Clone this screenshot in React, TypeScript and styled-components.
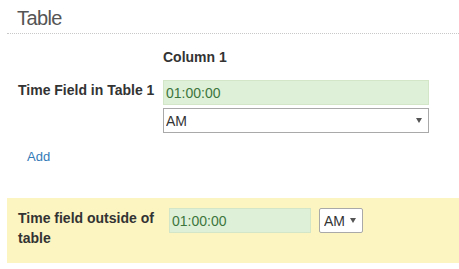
import React from "react";
import styled, { createGlobalStyle } from "styled-components";

const GlobalStyle = createGlobalStyle`
  body {
    margin: 0;
    background: #fff;
    font-family: "Liberation Sans", Arial, sans-serif;
    color: #333;
  }
`;

const Page = styled.div`
  width: 459px;
  height: 269px;
  padding-left: 7px;
  box-sizing: border-box;
  overflow: hidden;
`;

const Title = styled.h2`
  margin: 0;
  padding: 6px 0 3px 10px;
  height: 24px;
  line-height: 24px;
  font-size: 20px;
  font-weight: normal;
  letter-spacing: -0.6px;
  color: #555;
  border-bottom: 1px dotted #c8c8c8;
`;

const TableGrid = styled.div`
  display: grid;
  grid-template-columns: 156px 266px;
  margin-top: 13px;
`;

const ColumnHeader = styled.div`
  grid-column: 2;
  font-size: 14px;
  font-weight: bold;
  line-height: 20px;
  color: #333;
  margin-bottom: 13px;
`;

const RowLabel = styled.div<{ $width?: number }>`
  box-sizing: border-box;
  padding-left: 11px;
  font-size: 14px;
  font-weight: bold;
  line-height: 20px;
  color: #333;
  width: ${(p) => (p.$width ? `${p.$width}px` : "auto")};
  flex-shrink: 0;
`;

const Cell = styled.div`
  display: flex;
  flex-direction: column;
  gap: 3px;
`;

const TimeInput = styled.input<{ $width: number }>`
  box-sizing: border-box;
  width: ${(p) => p.$width}px;
  height: 25px;
  margin: 0;
  padding: 0 2px;
  border: 1px solid #d3e7c8;
  background: #dff0d8;
  color: #3c763d;
  font-family: "Liberation Sans", Arial, sans-serif;
  font-size: 14px;
  outline: none;
`;

const SelectWrap = styled.div<{ $width: number }>`
  position: relative;
  width: ${(p) => p.$width}px;
  height: 25px;
  flex-shrink: 0;

  &::after {
    content: "";
    position: absolute;
    right: 7px;
    top: 10px;
    border-left: 3px solid transparent;
    border-right: 3px solid transparent;
    border-top: 5px solid #555;
    pointer-events: none;
  }
`;

const Select = styled.select<{ $pad: number; $round?: boolean }>`
  appearance: none;
  -webkit-appearance: none;
  box-sizing: border-box;
  width: 100%;
  height: 25px;
  margin: 0;
  padding: 0 0 0 ${(p) => p.$pad}px;
  border: 1px solid #a9a9a9;
  border-radius: ${(p) => (p.$round ? "2px" : "0")};
  background: #fff;
  color: #333;
  font-family: "Liberation Sans", Arial, sans-serif;
  font-size: 14px;
  outline: none;
`;

const AddLink = styled.a`
  display: block;
  margin-top: 15px;
  padding-left: 20px;
  font-size: 13px;
  line-height: 18px;
  color: #337ab7;
  text-decoration: none;
`;

const Highlight = styled.div`
  display: flex;
  align-items: flex-start;
  margin-top: 32px;
  padding: 10px 0 15px 0;
  background: #fcf5c2;
`;

const InlineFields = styled.div`
  display: flex;
  align-items: flex-start;
  gap: 8px;
  margin-left: 11px;
`;

export default function App() {
  return (
    <>
      <GlobalStyle />
      <Page>
        <Title>Table</Title>
        <TableGrid>
          <ColumnHeader>Column 1</ColumnHeader>
          <RowLabel>Time Field in Table 1</RowLabel>
          <Cell>
            <TimeInput $width={266} defaultValue="01:00:00" />
            <SelectWrap $width={266}>
              <Select $pad={2} defaultValue="AM">
                <option>AM</option>
                <option>PM</option>
              </Select>
            </SelectWrap>
          </Cell>
        </TableGrid>
        <AddLink href="#">Add</AddLink>
        <Highlight>
          <RowLabel $width={151}>Time field outside of table</RowLabel>
          <InlineFields>
            <TimeInput $width={142} defaultValue="01:00:00" />
            <SelectWrap $width={44}>
              <Select $pad={4} $round defaultValue="AM">
                <option>AM</option>
                <option>PM</option>
              </Select>
            </SelectWrap>
          </InlineFields>
        </Highlight>
      </Page>
    </>
  );
}
